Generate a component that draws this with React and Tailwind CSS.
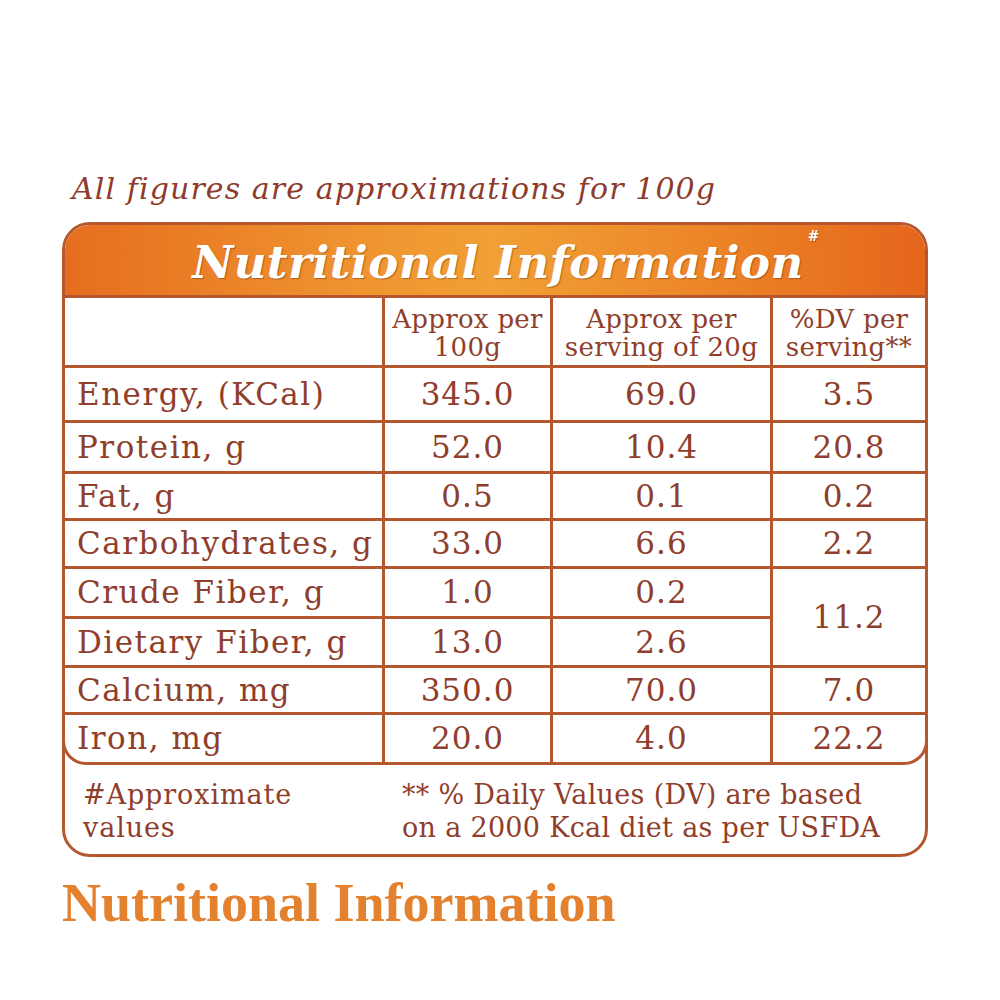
import React from 'react';

const rows = [
  { label: 'Energy, (KCal)', a: '345.0', b: '69.0', c: '3.5', h: 'h-[52px]' },
  { label: 'Protein, g', a: '52.0', b: '10.4', c: '20.8', h: 'h-[48px]' },
  { label: 'Fat, g', a: '0.5', b: '0.1', c: '0.2', h: 'h-[44px]' },
  { label: 'Carbohydrates, g', a: '33.0', b: '6.6', c: '2.2', h: 'h-[45px]' },
  { label: 'Crude Fiber, g', a: '1.0', b: '0.2', c: '11.2', h: 'h-[47px]', span: true },
  { label: 'Dietary Fiber, g', a: '13.0', b: '2.6', h: 'h-[46px]', skip: true },
  { label: 'Calcium, mg', a: '350.0', b: '70.0', c: '7.0', h: 'h-[44px]' },
  { label: 'Iron, mg', a: '20.0', b: '4.0', c: '22.2', h: 'h-[47px]' },
];

const serif = { fontFamily: '"DejaVu Serif", serif' };

export default function App() {
  return (
    <div className="min-h-screen bg-white pt-[170px] pl-[62px]" style={serif}>
      {/* subtitle */}
      <p className="pl-[10px] text-[30px] leading-[38px] italic text-[#8e3b2c] tracking-[1.1px]">
        All figures are approximations for 100g
      </p>

      {/* main box */}
      <div className="mt-[14px] w-[866px] rounded-[28px] border-[3px] border-[#b5582f] text-[#8f3e2b]">
        {/* orange header */}
        <div className="h-[73px] rounded-t-[25px] border-b-[3px] border-[#b5582f] bg-[linear-gradient(90deg,#e66d1f_0%,#ef9530_35%,#f0a035_50%,#ec8527_75%,#e6651c_100%)] flex items-center justify-center">
          <h1 className="text-[45px] leading-none font-bold italic text-white tracking-[0.4px] [text-shadow:1px_1px_1px_rgba(120,50,10,0.5)] mt-[4px] ml-[22px]">
            Nutritional Information<sup className="text-[14px] align-top relative top-[-4px] ml-[4px]">#</sup>
          </h1>
        </div>

        {/* table */}
        <div className="-mx-[3px] border-x-[3px] border-b-[3px] border-[#b5582f] rounded-b-[24px] overflow-hidden bg-[#b5582f]">
          <div className="grid grid-cols-[317px_165px_217px_152px] gap-[3px] text-[31px] tracking-[1.5px]">
            <div className="h-[67px] bg-white" />
            <div className="h-[67px] bg-white flex flex-col items-center justify-center text-[26px] leading-[28px] tracking-[0.3px] pt-[2px]">
              <span>Approx per</span>
              <span>100g</span>
            </div>
            <div className="h-[67px] bg-white flex flex-col items-center justify-center text-[26px] leading-[28px] tracking-[0.3px] pt-[2px]">
              <span>Approx per</span>
              <span>serving of 20g</span>
            </div>
            <div className="h-[67px] bg-white flex flex-col items-center justify-center text-[26px] leading-[28px] tracking-[0.3px] pt-[2px]">
              <span>%DV per</span>
              <span>serving**</span>
            </div>

            {rows.map((r) => (
              <React.Fragment key={r.label}>
                <div className={`${r.h} bg-white flex items-center pl-[12px]`}>{r.label}</div>
                <div className={`${r.h} bg-white flex items-center justify-center tracking-[1px]`}>{r.a}</div>
                <div className={`${r.h} bg-white flex items-center justify-center tracking-[1px]`}>{r.b}</div>
                {r.skip ? null : r.span ? (
                  <div className="row-span-2 bg-white flex items-center justify-center tracking-[1px]">{r.c}</div>
                ) : (
                  <div className={`${r.h} bg-white flex items-center justify-center tracking-[1px]`}>{r.c}</div>
                )}
              </React.Fragment>
            ))}
          </div>
        </div>

        {/* footnotes */}
        <div className="h-[89px] flex items-center text-[27px] leading-[33px] pt-[2px]">
          <div className="w-[323px] pl-[18px] tracking-[0.9px]">
            <div>#Approximate</div>
            <div>values</div>
          </div>
          <div className="pl-[14px] tracking-[0.3px]">
            <div>** % Daily Values (DV) are based</div>
            <div>on a 2000 Kcal diet as per USFDA</div>
          </div>
        </div>
      </div>

      {/* bottom heading */}
      <h2
        className="mt-[19px] text-[54px] leading-none font-bold text-[#e3812f]"
        style={{ fontFamily: '"Liberation Serif", serif' }}
      >
        Nutritional Information
      </h2>
    </div>
  );
}
